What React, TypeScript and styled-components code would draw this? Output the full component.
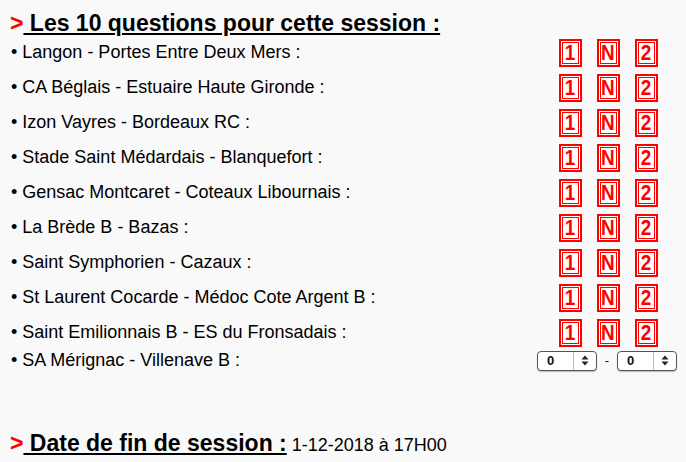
import React from "react";
import styled, { createGlobalStyle } from "styled-components";

const GlobalStyle = createGlobalStyle`
  html, body { background: #f9f9f9; }
  body {
    margin: 8px 8px 0;
    font-family: "Liberation Sans", Arial, Helvetica, sans-serif;
    color: #000;
    overflow: hidden;
  }
`;

const Page = styled.div`
  display: flex;
  flex-direction: column;
`;

const Heading = styled.div<{ $top?: number }>`
  margin-top: ${(p) => p.$top ?? 3}px;
  padding-left: 2px;
  font-size: 23px;
  line-height: 24px;
  font-weight: bold;
  white-space: pre;
`;

const Arrow = styled.span`
  color: #ff0000;
`;

const Under = styled.span`
  text-decoration: underline;
  text-decoration-thickness: 2px;
  text-underline-offset: 2px;
`;

const HeadValue = styled.span`
  font-size: 18px;
  font-weight: normal;
`;

const List = styled.div`
  display: flex;
  flex-direction: column;
`;

const Row = styled.div<{ $h: number }>`
  display: grid;
  grid-template-columns: 1fr 140px;
  align-items: center;
  height: ${(p) => p.$h}px;
`;

const Label = styled.div`
  padding-left: 3px;
  font-size: 18px;
  white-space: pre;
`;

const Choices = styled.div`
  display: flex;
  justify-content: center;
  gap: 15px;
`;

const Choice = styled.div`
  width: 23px;
  height: 28px;
  box-sizing: border-box;
  border: 2px solid #ff0000;
  box-shadow: inset 0 0 0 1px #fff, inset 0 0 0 2px #ff0000;
  background: #fff;
  display: flex;
  align-items: center;
  justify-content: center;
  color: #ff0000;
  font-weight: bold;
  font-size: 22px;
  line-height: 1;
`;

const Glyph = styled.span`
  display: inline-block;
  transform: scaleX(0.86);
`;

const Scores = styled.div`
  display: flex;
  align-items: center;
  justify-content: space-between;
  margin-left: -1px;
  margin-right: 1px;
`;

const Dash = styled.span`
  font-size: 13px;
  color: #222;
`;

const SelectBox = styled.div`
  width: 60px;
  height: 20px;
  box-sizing: border-box;
  border: 1px solid #555;
  border-radius: 4px;
  background: #fff;
  box-shadow: 0 1px 1px rgba(0, 0, 0, 0.25);
  display: flex;
  align-items: stretch;
`;

const SelectValue = styled.div`
  flex: 1;
  padding-left: 9px;
  font-size: 13px;
  font-weight: bold;
  line-height: 18px;
  color: #111;
`;

const SelectArrow = styled.div`
  width: 22px;
  border-left: 1px solid #bbb;
  display: flex;
  align-items: center;
  justify-content: center;
`;

const matches = [
  "Langon - Portes Entre Deux Mers :",
  "CA Béglais - Estuaire Haute Gironde :",
  "Izon Vayres - Bordeaux RC :",
  "Stade Saint Médardais - Blanquefort :",
  "Gensac Montcaret - Coteaux Libournais :",
  "La Brède B - Bazas :",
  "Saint Symphorien - Cazaux :",
  "St Laurent Cocarde - Médoc Cote Argent B :",
  "Saint Emilionnais B - ES du Fronsadais :",
];

const Select = () => (
  <SelectBox>
    <SelectValue>0</SelectValue>
    <SelectArrow>
      <svg width="8" height="11" viewBox="0 0 8 11">
        <path d="M4 0.5 L7.5 4.5 H0.5 Z" fill="#222" />
        <path d="M4 10.5 L7.5 6.5 H0.5 Z" fill="#222" />
      </svg>
    </SelectArrow>
  </SelectBox>
);

export default function App() {
  return (
    <>
      <GlobalStyle />
      <Page>
        <Heading>
          <Arrow>&gt;</Arrow>
          <Under> Les 10 questions pour cette session :</Under>
        </Heading>
        <List>
          {matches.map((m) => (
            <Row key={m} $h={35}>
              <Label>• {m}</Label>
              <Choices>
                <Choice><Glyph>1</Glyph></Choice>
                <Choice><Glyph>N</Glyph></Choice>
                <Choice><Glyph>2</Glyph></Choice>
              </Choices>
            </Row>
          ))}
          <Row $h={20}>
            <Label>• SA Mérignac - Villenave B :</Label>
            <Scores>
              <Select />
              <Dash>-</Dash>
              <Select />
            </Scores>
          </Row>
        </List>
        <Heading $top={61}>
          <Arrow>&gt;</Arrow>
          <Under> Date de fin de session :</Under>
          <HeadValue> 1-12-2018 à 17H00</HeadValue>
        </Heading>
      </Page>
    </>
  );
}
